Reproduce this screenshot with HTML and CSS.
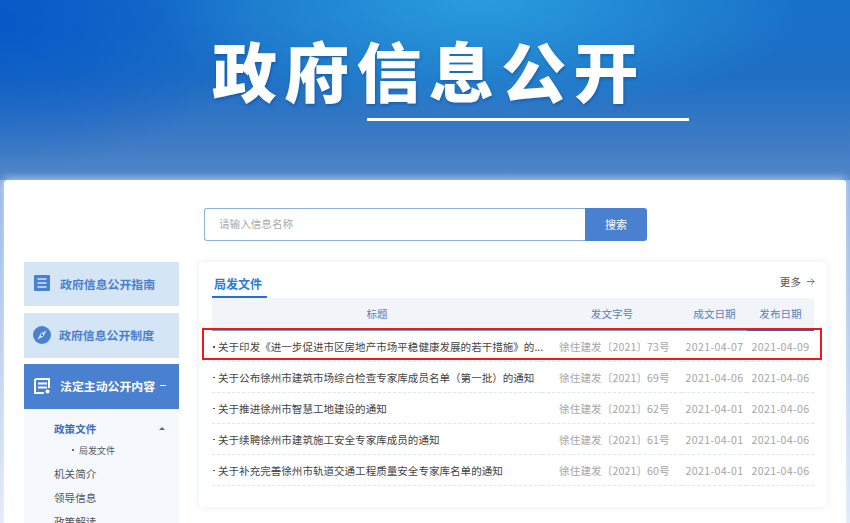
FILE: index.html
```html
<!DOCTYPE html>
<html lang="zh-CN">
<head>
<meta charset="utf-8">
<title>政府信息公开</title>
<link rel="stylesheet" href="styles.css">
</head>
<body>
<header class="hero">
  <h1 class="hero-title">政府信息公开</h1>
  <div class="hero-line"></div>
</header>
<main class="card">
  <form class="search">
    <input class="search-input" type="text" placeholder="请输入信息名称">
    <button class="search-btn" type="button">搜索</button>
  </form>
  <div class="columns">
    <nav class="side">
      <a class="side-item">
        <svg class="side-icon" viewBox="0 0 16 16"><rect width="16" height="16" rx="1" fill="#4a80d0"/><path d="M3.500 4h9M3.500 8h9M3.500 12h9" stroke="#d4e5f6" stroke-width="1.700"/></svg>
        <span>政府信息公开指南</span>
      </a>
      <a class="side-item">
        <svg class="side-icon" viewBox="0 0 18 18"><circle cx="9" cy="9" r="9" fill="#4a80d0"/><path d="M13.500 4.500 10.400 10.400 4.500 13.500 7.600 7.600Z" fill="#d4e5f6"/><circle cx="9" cy="9" r="1.200" fill="#4a80d0"/></svg>
        <span>政府信息公开制度</span>
      </a>
      <a class="side-item side-active">
        <svg class="side-icon" viewBox="0 0 16 16"><path d="M1 1h14v9M1 1v14h9M4 5.500h9M4 9.500h9" fill="none" stroke="#fff" stroke-width="2"/><circle cx="13.500" cy="13.500" r="2" fill="#fff"/></svg>
        <span>法定主动公开内容</span>
        <i class="side-minus"></i>
      </a>
      <div class="sub">
        <div class="sub-row sub-current"><span>政策文件</span><i class="caret"></i></div>
        <div class="sub-child">局发文件</div>
        <div class="sub-row">机关简介</div>
        <div class="sub-row">领导信息</div>
        <div class="sub-row">政策解读</div>
      </div>
    </nav>
    <section class="panel">
      <div class="panel-head">
        <h2 class="tab">局发文件</h2>
        <a class="more">更多
          <svg class="more-arrow" viewBox="0 0 10 10"><path d="M1 5h8M5.500 1.500 9 5 5.500 8.500" fill="none" stroke="#666" stroke-width="1"/></svg>
        </a>
      </div>
      <table class="docs">
        <colgroup><col class="c-title"><col class="c-no"><col class="c-d1"><col class="c-d2"></colgroup>
        <thead>
          <tr><th>标题</th><th>发文字号</th><th>成文日期</th><th class="th-last">发布日期</th></tr>
        </thead>
        <tbody>
          <tr class="marked">
            <td class="t">关于印发《进一步促进市区房地产市场平稳健康发展的若干措施》的...<div class="red-box"></div></td>
            <td class="m">徐住建发〔2021〕73号</td><td class="m">2021-04-07</td><td class="m">2021-04-09</td>
          </tr>
          <tr>
            <td class="t">关于公布徐州市建筑市场综合检查专家库成员名单（第一批）的通知</td>
            <td class="m">徐住建发〔2021〕69号</td><td class="m">2021-04-06</td><td class="m">2021-04-06</td>
          </tr>
          <tr>
            <td class="t">关于推进徐州市智慧工地建设的通知</td>
            <td class="m">徐住建发〔2021〕62号</td><td class="m">2021-04-01</td><td class="m">2021-04-06</td>
          </tr>
          <tr>
            <td class="t">关于续聘徐州市建筑施工安全专家库成员的通知</td>
            <td class="m">徐住建发〔2021〕61号</td><td class="m">2021-04-01</td><td class="m">2021-04-06</td>
          </tr>
          <tr>
            <td class="t">关于补充完善徐州市轨道交通工程质量安全专家库名单的通知</td>
            <td class="m">徐住建发〔2021〕60号</td><td class="m">2021-04-01</td><td class="m">2021-04-06</td>
          </tr>
        </tbody>
      </table>
    </section>
  </div>
</main>
</body>
</html>
```
FILE: styles.css
```css
* { box-sizing: border-box; }
html, body { margin: 0; height: 523px; overflow: hidden; }
body {
  font-family: "Noto Sans CJK SC", "Liberation Sans", sans-serif;
  background: linear-gradient(180deg, #8fb2e4 180px, #dfe9f8 523px);
  color: #444;
}
.hero {
  height: 180px;
  padding-top: 30px;
  background:
    radial-gradient(ellipse 330px 120px at 480px 0, rgba(44,165,226,.85), rgba(44,165,226,0)),
    radial-gradient(ellipse 260px 150px at 0 20px, rgba(0,80,200,.75), rgba(0,80,200,0)),
    linear-gradient(180deg, #1870c8 0%, #1f6fc4 45%, #3f7cc4 80%, #5186c8 100%);
}
.hero-title {
  margin: 0 0 0 212px;
  font-size: 65px;
  line-height: 78px;
  font-weight: 900;
  letter-spacing: 7.300px;
  color: #fff;
  white-space: nowrap;
  text-shadow: 1px 2px 3px rgba(0,40,110,.3);
}
.hero-line {
  width: 322px;
  height: 3px;
  margin: 10px 0 0 367px;
  background: #fff;
}
.card {
  width: 842px;
  height: 400px;
  margin-left: 4px;
  padding: 28px 20px 0;
  background: #fff;
  border-radius: 4px 4px 0 0;
  box-shadow: 0 -2px 8px rgba(255,255,255,.55);
}
.search { display: flex; width: 443px; height: 33px; margin-left: 180px; }
.search-input {
  flex: 1;
  min-width: 0;
  padding: 0 14px 2px;
  border: 1px solid #8fb1e2;
  border-right: 0;
  border-radius: 3px 0 0 3px;
  font: 400 10.600px "Noto Sans CJK SC", sans-serif;
  outline: 0;
}
.search-input::placeholder { color: #a9a9a9; }
.search-btn {
  width: 62px;
  padding: 0 0 1px;
  border: 0;
  border-radius: 0 3px 3px 0;
  background: #4a80d0;
  color: #fff;
  font: 400 11px "Noto Sans CJK SC", sans-serif;
}
.columns { display: flex; gap: 20px; margin-top: 21px; }
.side { width: 155px; flex: none; }
.side-item {
  display: flex;
  align-items: center;
  height: 45px;
  margin-bottom: 6px;
  padding: 0 0 2px 10px;
  background: #d4e5f6;
  color: #4a7fd0;
  font-size: 11.900px;
  font-weight: 700;
  white-space: nowrap;
}
.side-item:first-child { height: 44px; margin-bottom: 7px; }
.side-active { margin-bottom: 0; background: #4a80d0; color: #fff; }
.side-icon { width: 16px; height: 16px; margin-right: 10px; flex: none; }
.side-item:nth-child(2) .side-icon { width: 18px; height: 18px; margin: 0 8px 0 -1px; }
.side-minus { width: 6px; height: 1px; margin-left: 5px; background: #fff; }
.sub { height: 130px; padding-top: 9px; background: #f5f9fd; font-size: 10.600px; color: #555; }
.sub-row {
  display: flex;
  align-items: center;
  justify-content: space-between;
  height: 24px;
  padding: 0 14px 0 30px;
}
.sub-current { height: 21px; color: #3d6cc0; font-weight: 700; }
.caret { width: 0; height: 0; border: 3px solid transparent; border-top: 0; border-bottom: 3px solid #3d6cc0; }
.sub-child {
  display: flex;
  align-items: center;
  height: 22px;
  padding-left: 48px;
  font-size: 9px;
}
.sub-child::before {
  content: "";
  width: 2px;
  height: 2px;
  margin-right: 5px;
  background: #444;
  border-radius: 50%;
}
.panel {
  width: 628px;
  height: 245px;
  padding: 0 13px;
  background: #fff;
  border-radius: 4px;
  box-shadow: 0 0 6px rgba(190,205,230,.4);
}
.panel-head { display: flex; justify-content: space-between; align-items: flex-end; height: 36px; }
.tab {
  margin: 0;
  width: 55px;
  height: 36px;
  padding: 13px 0 0 2px;
  border-bottom: 2px solid #2070e0;
  color: #2a7ddc;
  font-size: 12px;
  line-height: 18px;
  font-weight: 700;
  white-space: nowrap;
}
.more {
  display: flex;
  align-items: center;
  gap: 5px;
  height: 22px;
  margin: 0 -1px 6px 0;
  font-size: 10.600px;
  color: #555;
}
.more-arrow { width: 9px; height: 9px; }
.docs { width: 602px; border-collapse: collapse; table-layout: fixed; font-size: 10.600px; }
.c-title { width: 330px; }
.c-no { width: 140px; }
.c-d1 { width: 65px; }
.c-d2 { width: 67px; }
.docs th {
  height: 32px;
  padding: 0;
  background: #f1f5fa;
  border-bottom: 2px solid #6aa2c8;
  color: #5b7fb5;
  font-weight: 400;
}
.docs th.th-last { border-bottom-color: #3f5f9e; }
.docs td {
  height: 31px;
  padding: 2px 0 0;
  border-bottom: 1px dashed #dce5f1;
  white-space: nowrap;
}
.t { position: relative; padding-left: 6px !important; color: #444; font-size: 10.550px; }
.t::before {
  content: "";
  position: absolute;
  left: 1px;
  top: 15px;
  width: 1.500px;
  height: 1.500px;
  background: #555;
}
.m { color: #a5a5a5; text-align: center; letter-spacing: .35px; }
.docs td.m:nth-child(2) { text-align: left; padding-left: 17px; letter-spacing: .1px; }
.red-box {
  position: absolute;
  left: -10px;
  top: -3px;
  width: 620px;
  height: 32px;
  border: 2px solid #f01818;
  pointer-events: none;
}
```
